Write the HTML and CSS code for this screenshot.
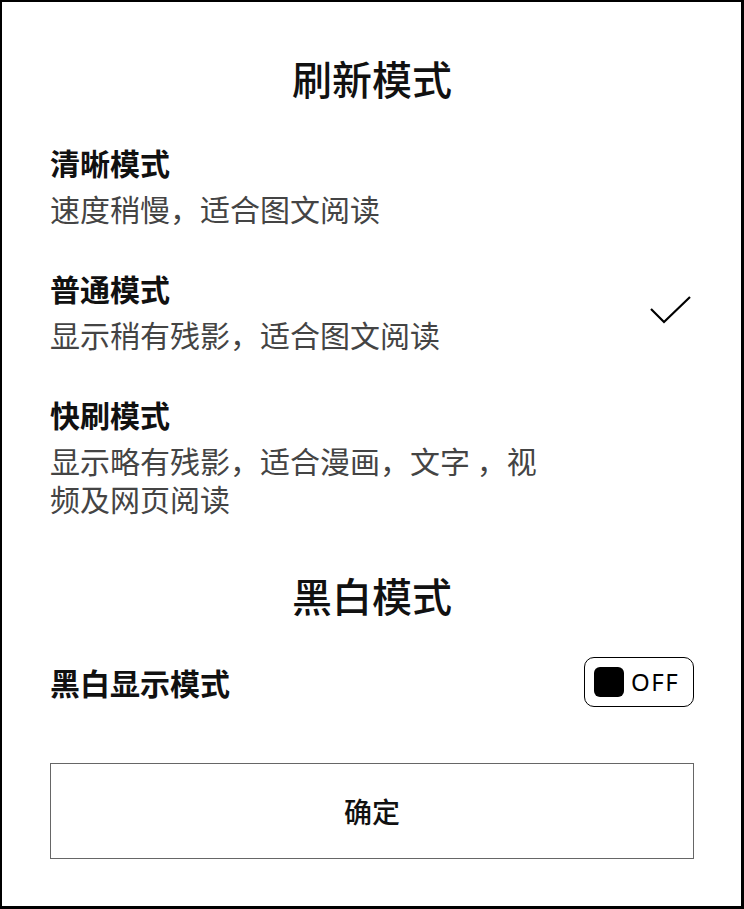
FILE: index.html
```html
<!DOCTYPE html>
<html lang="zh-CN">
<head>
<meta charset="utf-8">
<title>刷新模式</title>
<link rel="stylesheet" href="styles.css">
</head>
<body>
<div class="panel">
  <h1 class="heading heading-first">刷新模式</h1>
  <div class="mode">
    <div class="mode-text">
      <div class="mode-title">清晰模式</div>
      <div class="mode-desc">速度稍慢，适合图文阅读</div>
    </div>
  </div>
  <div class="mode">
    <div class="mode-text">
      <div class="mode-title">普通模式</div>
      <div class="mode-desc">显示稍有残影，适合图文阅读</div>
    </div>
    <svg class="check" width="42" height="30" viewBox="0 0 42 30" aria-hidden="true">
      <polyline points="1,13 14,26 40,1" fill="none" stroke="#000" stroke-width="2.2"/>
    </svg>
  </div>
  <div class="mode">
    <div class="mode-text">
      <div class="mode-title">快刷模式</div>
      <div class="mode-desc">显示略有残影，适合漫画，文字 ，视频及网页阅读</div>
    </div>
  </div>
  <h2 class="heading heading-second">黑白模式</h2>
  <div class="setting-row">
    <div class="setting-label">黑白显示模式</div>
    <div class="toggle">
      <span class="toggle-knob"></span>
      <span class="toggle-text">OFF</span>
    </div>
  </div>
  <div class="confirm">确定</div>
</div>
</body>
</html>
```
FILE: styles.css
```css
html, body {
  margin: 0;
  padding: 0;
}
body {
  width: 744px;
  height: 909px;
  box-sizing: border-box;
  border-style: solid;
  border-color: #000;
  border-width: 2px 3px 3px 2px;
  background: #fff;
  font-family: "Noto Sans CJK SC", "Noto Sans", sans-serif;
  color: #111;
  overflow: hidden;
}
.panel {
  padding: 0 47px 0 48px;
}
.heading {
  margin: 0;
  text-align: center;
  font-size: 40px;
  font-weight: 500;
  line-height: 50px;
  color: #111;
}
.heading-first {
  margin-top: 51px;
}
.mode {
  display: flex;
  align-items: center;
  justify-content: space-between;
  margin-top: 39px;
}
.mode + .mode {
  margin-top: 41px;
}
.mode-text {
  width: 500px;
}
.mode-title {
  font-size: 30px;
  font-weight: 700;
  line-height: 40px;
  color: #111;
}
.mode-desc {
  margin-top: 7px;
  font-size: 30px;
  font-weight: 400;
  line-height: 38px;
  color: #444;
}
.check {
  display: block;
  margin-right: 2px;
}
.heading-second {
  margin-top: 53px;
}
.setting-row {
  display: flex;
  align-items: center;
  justify-content: space-between;
  margin-top: 37px;
  height: 50px;
}
.setting-label {
  font-size: 30px;
  font-weight: 700;
  line-height: 40px;
}
.toggle {
  box-sizing: border-box;
  width: 110px;
  height: 50px;
  border: 1px solid #000;
  border-radius: 10px;
  display: flex;
  align-items: center;
  padding: 0 9px;
  gap: 7px;
}
.toggle-knob {
  width: 30px;
  height: 30px;
  border-radius: 6px;
  background: #000;
  flex: none;
}
.toggle-text {
  font-family: "Noto Sans", sans-serif;
  font-size: 24px;
  letter-spacing: 1.5px;
  color: #000;
  line-height: 1;
}
.confirm {
  box-sizing: border-box;
  margin-top: 56px;
  height: 96px;
  border: 1px solid #666;
  display: flex;
  align-items: center;
  justify-content: center;
  font-size: 28px;
  font-weight: 500;
  color: #111;
}
```
